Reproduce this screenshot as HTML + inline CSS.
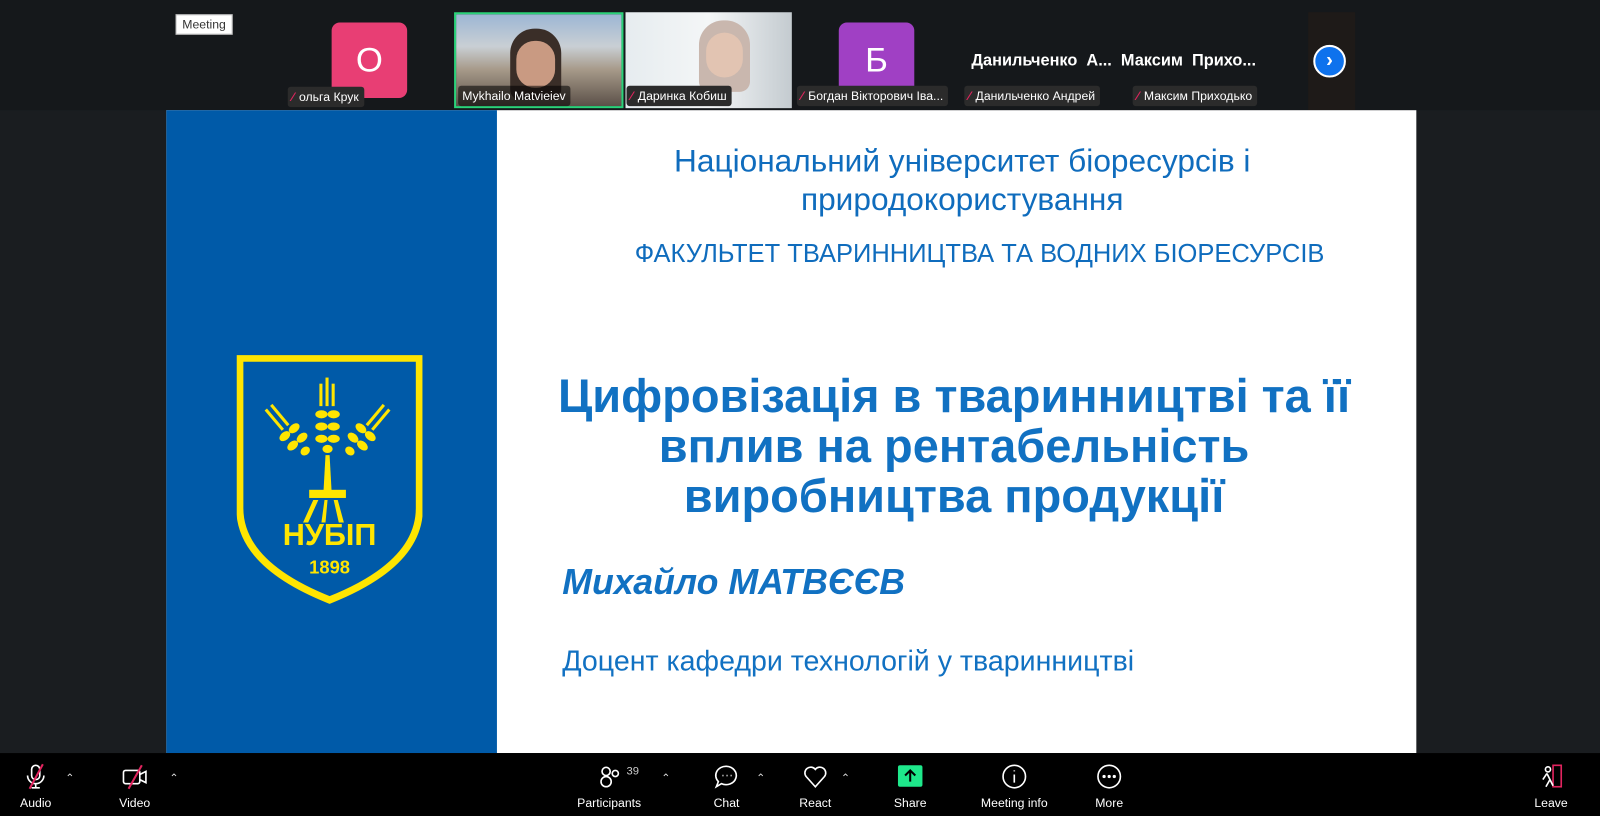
<!DOCTYPE html>
<html><head><meta charset="utf-8"><style>
*{margin:0;padding:0;box-sizing:border-box}
html,body{width:1600px;height:816px;overflow:hidden}
body{background:#1a1d20;position:relative;font-family:"Liberation Sans",sans-serif}
#w{position:absolute;left:0;top:0;width:1568px;height:800px;transform:scale(1.020408);transform-origin:0 0}
.abs{position:absolute}
.lbl{position:absolute;height:20px;background:#2b2b2b;color:#fff;font-size:12px;line-height:20px;padding:0 5px 0 4px;border-radius:3px;white-space:nowrap}
.lbl .m{color:#e0245e;font-weight:bold;margin-right:5px}
.sl{position:absolute;color:#0f6cbd;white-space:nowrap;text-align:center}
.tb{position:absolute;top:738px;left:0;width:1600px;height:78px;background:#000}
.bt{position:absolute;top:0;width:80px;text-align:center;color:#fff;font-size:12px}
.bt svg{display:block;margin:10px auto 0}
.bt span{display:block;margin-top:6px}
.car{position:absolute;top:18px;color:#ddd;font-size:11px}
</style></head><body><div id="w">
<div class="abs" style="left:0;top:0;width:1600px;height:108px;background:#15181b"></div>
<div class="abs" style="left:172px;top:14px;width:56px;height:20px;background:#fff;border:1px solid #bbb;font-size:12px;line-height:18px;text-align:center;color:#333">Meeting</div>
<div class="abs" style="left:325px;top:22px;width:74px;height:74px;background:#e83e74;border-radius:8px;color:#fff;font-size:34px;text-align:center;line-height:74px">О</div>
<div class="lbl" style="left:282px;top:85px"><span class="m">⁄</span>ольга Крук</div>
<div class="abs" style="left:445px;top:12px;width:166px;height:94px;border:2px solid #2bd27a;background:linear-gradient(180deg,#9cb6d4 0%,#c9cfd4 35%,#a79a8a 60%,#5b5048 100%)"></div>
<div class="abs" style="left:500px;top:28px;width:50px;height:70px;background:#3a2e28;border-radius:24px 24px 10px 10px"></div>
<div class="abs" style="left:506px;top:40px;width:38px;height:46px;background:#c99a82;border-radius:18px"></div>
<div class="lbl" style="left:449px;top:84px;background:rgba(0,0,0,.55)">Mykhailo Matvieiev</div>
<div class="abs" style="left:613px;top:12px;width:163px;height:94px;background:linear-gradient(90deg,#e6ecef,#f4f6f7 50%,#c4cbd0)"></div>
<div class="abs" style="left:685px;top:20px;width:50px;height:70px;background:#c9b7ae;border-radius:24px 24px 10px 10px"></div>
<div class="abs" style="left:692px;top:32px;width:36px;height:44px;background:#e2c4b2;border-radius:18px"></div>
<div class="lbl" style="left:614px;top:84px"><span class="m">⁄</span>Даринка Кобиш</div>
<div class="abs" style="left:822px;top:22px;width:74px;height:74px;background:#a040c4;border-radius:8px;color:#fff;font-size:34px;text-align:center;line-height:74px">Б</div>
<div class="lbl" style="left:781px;top:84px"><span class="m">⁄</span>Богдан Вікторович Іва...</div>
<div class="abs" style="left:952px;top:51px;color:#fff;font-weight:bold;font-size:16px;white-space:nowrap">Данильченко &nbsp;А...&nbsp; Максим &nbsp;Прихо...</div>
<div class="lbl" style="left:945px;top:84px"><span class="m">⁄</span>Данильченко Андрей</div>
<div class="lbl" style="left:1110px;top:84px"><span class="m">⁄</span>Максим Приходько</div>
<div class="abs" style="left:1282px;top:12px;width:46px;height:96px;background:#1e1a18"></div>
<div class="abs" style="left:1287px;top:44px;width:32px;height:32px;border-radius:50%;background:#0e72ed;border:2px solid #fff;color:#fff;text-align:center;line-height:26px;font-size:20px;font-weight:bold">›</div>

<div class="abs" style="left:163px;top:108px;width:1225px;height:630px;background:#fff"></div>
<div class="abs" style="left:163px;top:108px;width:324px;height:630px;background:#005aa8"></div>
<svg class="abs" style="left:232px;top:348px" width="182" height="244" viewBox="0 0 182 244">
<path d="M3 3H179V150Q179 205 91 240Q3 205 3 150Z" fill="none" stroke="#ffe500" stroke-width="7"/>
<g fill="#ffe500">
<rect x="87" y="22" width="3" height="28"/><rect x="81" y="28" width="3" height="22"/><rect x="93" y="28" width="3" height="22"/>
<ellipse cx="83" cy="58" rx="6" ry="4"/><ellipse cx="95" cy="58" rx="6" ry="4"/><ellipse cx="83" cy="70" rx="6" ry="4"/><ellipse cx="95" cy="70" rx="6" ry="4"/><ellipse cx="83" cy="82" rx="6" ry="4"/><ellipse cx="95" cy="82" rx="6" ry="4"/><ellipse cx="89" cy="92" rx="5" ry="4"/>
<g transform="rotate(-40 89 120)"><ellipse cx="83" cy="62" rx="6" ry="4"/><ellipse cx="95" cy="62" rx="6" ry="4"/><ellipse cx="83" cy="74" rx="6" ry="4"/><ellipse cx="95" cy="74" rx="6" ry="4"/><ellipse cx="89" cy="86" rx="5" ry="4"/><rect x="84" y="30" width="3" height="26"/><rect x="91" y="30" width="3" height="26"/></g>
<g transform="rotate(40 89 120)"><ellipse cx="83" cy="62" rx="6" ry="4"/><ellipse cx="95" cy="62" rx="6" ry="4"/><ellipse cx="83" cy="74" rx="6" ry="4"/><ellipse cx="95" cy="74" rx="6" ry="4"/><ellipse cx="89" cy="86" rx="5" ry="4"/><rect x="84" y="30" width="3" height="26"/><rect x="91" y="30" width="3" height="26"/></g>
<path d="M87 98h4l2 36h-8z"/><rect x="71" y="132" width="36" height="8"/>
<path d="M75 142l-10 22h5l10-22zM86 142l-3 22h4l2-22zM95 142l5 22h5l-6-22z"/>
<text x="91" y="186" font-family="Liberation Sans" font-weight="bold" font-size="30" text-anchor="middle">НУБІП</text>
<text x="91" y="214" font-family="Liberation Sans" font-weight="bold" font-size="18" text-anchor="middle">1898</text>
</g></svg>

<div class="sl" style="left:533px;top:139px;width:820px;font-size:31px;line-height:38px">Національний університет біоресурсів і<br>природокористування</div>
<div class="sl" style="left:560px;top:235px;width:800px;font-size:25px">ФАКУЛЬТЕТ ТВАРИННИЦТВА ТА ВОДНИХ БІОРЕСУРСІВ</div>
<div class="sl" style="left:480px;top:364px;width:910px;font-size:46px;font-weight:bold;line-height:49px;color:#1171c2">Цифровізація в тваринництві та її<br>вплив на рентабельність<br>виробництва продукції</div>
<div class="abs" style="left:551px;top:551px;font-size:35px;font-weight:bold;font-style:italic;color:#1171c2;white-space:nowrap">Михайло МАТВЄЄВ</div>
<div class="abs" style="left:551px;top:632px;font-size:28px;color:#1171c2;white-space:nowrap">Доцент кафедри технологій у тваринництві</div>

<div class="tb">
<div class="bt" style="left:-5px"><svg width="24" height="26" viewBox="0 0 24 26" fill="none" stroke="#fff" stroke-width="1.6"><rect x="8" y="2" width="8" height="14" rx="4"/><path d="M4 12a8 8 0 0 0 16 0M12 20v4M8 24h8"/><path d="M19 1L6 25" stroke="#e0245e" stroke-width="2"/></svg><span>Audio</span></div>
<div class="car" style="left:64px">⌃</div>
<div class="bt" style="left:92px"><svg width="28" height="26" viewBox="0 0 28 26" fill="none" stroke="#fff" stroke-width="1.6"><rect x="3" y="7" width="16" height="13" rx="2"/><path d="M19 11l6-3v11l-6-3"/><path d="M21 2L8 25" stroke="#e0245e" stroke-width="2"/></svg><span>Video</span></div>
<div class="car" style="left:166px">⌃</div>
<div class="bt" style="left:557px"><svg width="26" height="26" viewBox="0 0 26 26" fill="none" stroke="#fff" stroke-width="1.6"><circle cx="10" cy="8" r="4"/><circle cx="10" cy="18" r="5"/><circle cx="19" cy="10" r="3"/></svg><span>Participants</span></div>
<div class="abs" style="left:614px;top:12px;color:#ccc;font-size:11px">39</div>
<div class="car" style="left:648px">⌃</div>
<div class="bt" style="left:672px"><svg width="26" height="26" viewBox="0 0 26 26" fill="none" stroke="#fff" stroke-width="1.6"><path d="M13 3a10 9 0 1 1-5 17l-5 3 2-5A10 9 0 0 1 13 3z"/><path d="M9 12h1M13 12h1M17 12h1"/></svg><span>Chat</span></div>
<div class="car" style="left:741px">⌃</div>
<div class="bt" style="left:759px"><svg width="26" height="26" viewBox="0 0 26 26" fill="none" stroke="#fff" stroke-width="1.6"><path d="M13 23L4 13a5 5 0 0 1 9-7 5 5 0 0 1 9 7z"/></svg><span>React</span></div>
<div class="car" style="left:824px">⌃</div>
<div class="bt" style="left:852px"><svg width="26" height="26" viewBox="0 0 26 26"><rect x="1" y="2" width="24" height="21" rx="2" fill="#1ee88b"/><path d="M13 18V7M8 12l5-5 5 5" stroke="#000" stroke-width="2" fill="none"/></svg><span>Share</span></div>
<div class="bt" style="left:954px"><svg width="26" height="26" viewBox="0 0 26 26" fill="none" stroke="#fff" stroke-width="1.6"><circle cx="13" cy="13" r="11"/><path d="M13 11v8M13 7v1"/></svg><span>Meeting info</span></div>
<div class="bt" style="left:1047px"><svg width="26" height="26" viewBox="0 0 26 26" fill="none" stroke="#fff" stroke-width="1.6"><circle cx="13" cy="13" r="11"/><circle cx="8" cy="13" r=".8"/><circle cx="13" cy="13" r=".8"/><circle cx="18" cy="13" r=".8"/></svg><span>More</span></div>
<div class="bt" style="left:1480px"><svg width="26" height="26" viewBox="0 0 26 26" fill="none" stroke="#fff" stroke-width="1.6"><rect x="15" y="2" width="8" height="21" stroke="#e0245e"/><circle cx="10" cy="6" r="2.5"/><path d="M9 10l-4 6M9 10l3 6-4 7M12 16l3 6"/></svg><span>Leave</span></div>
</div>
<div class="abs" style="left:0;top:813px;width:1600px;height:3px;background:#6d7275"></div>
</div></body></html>
